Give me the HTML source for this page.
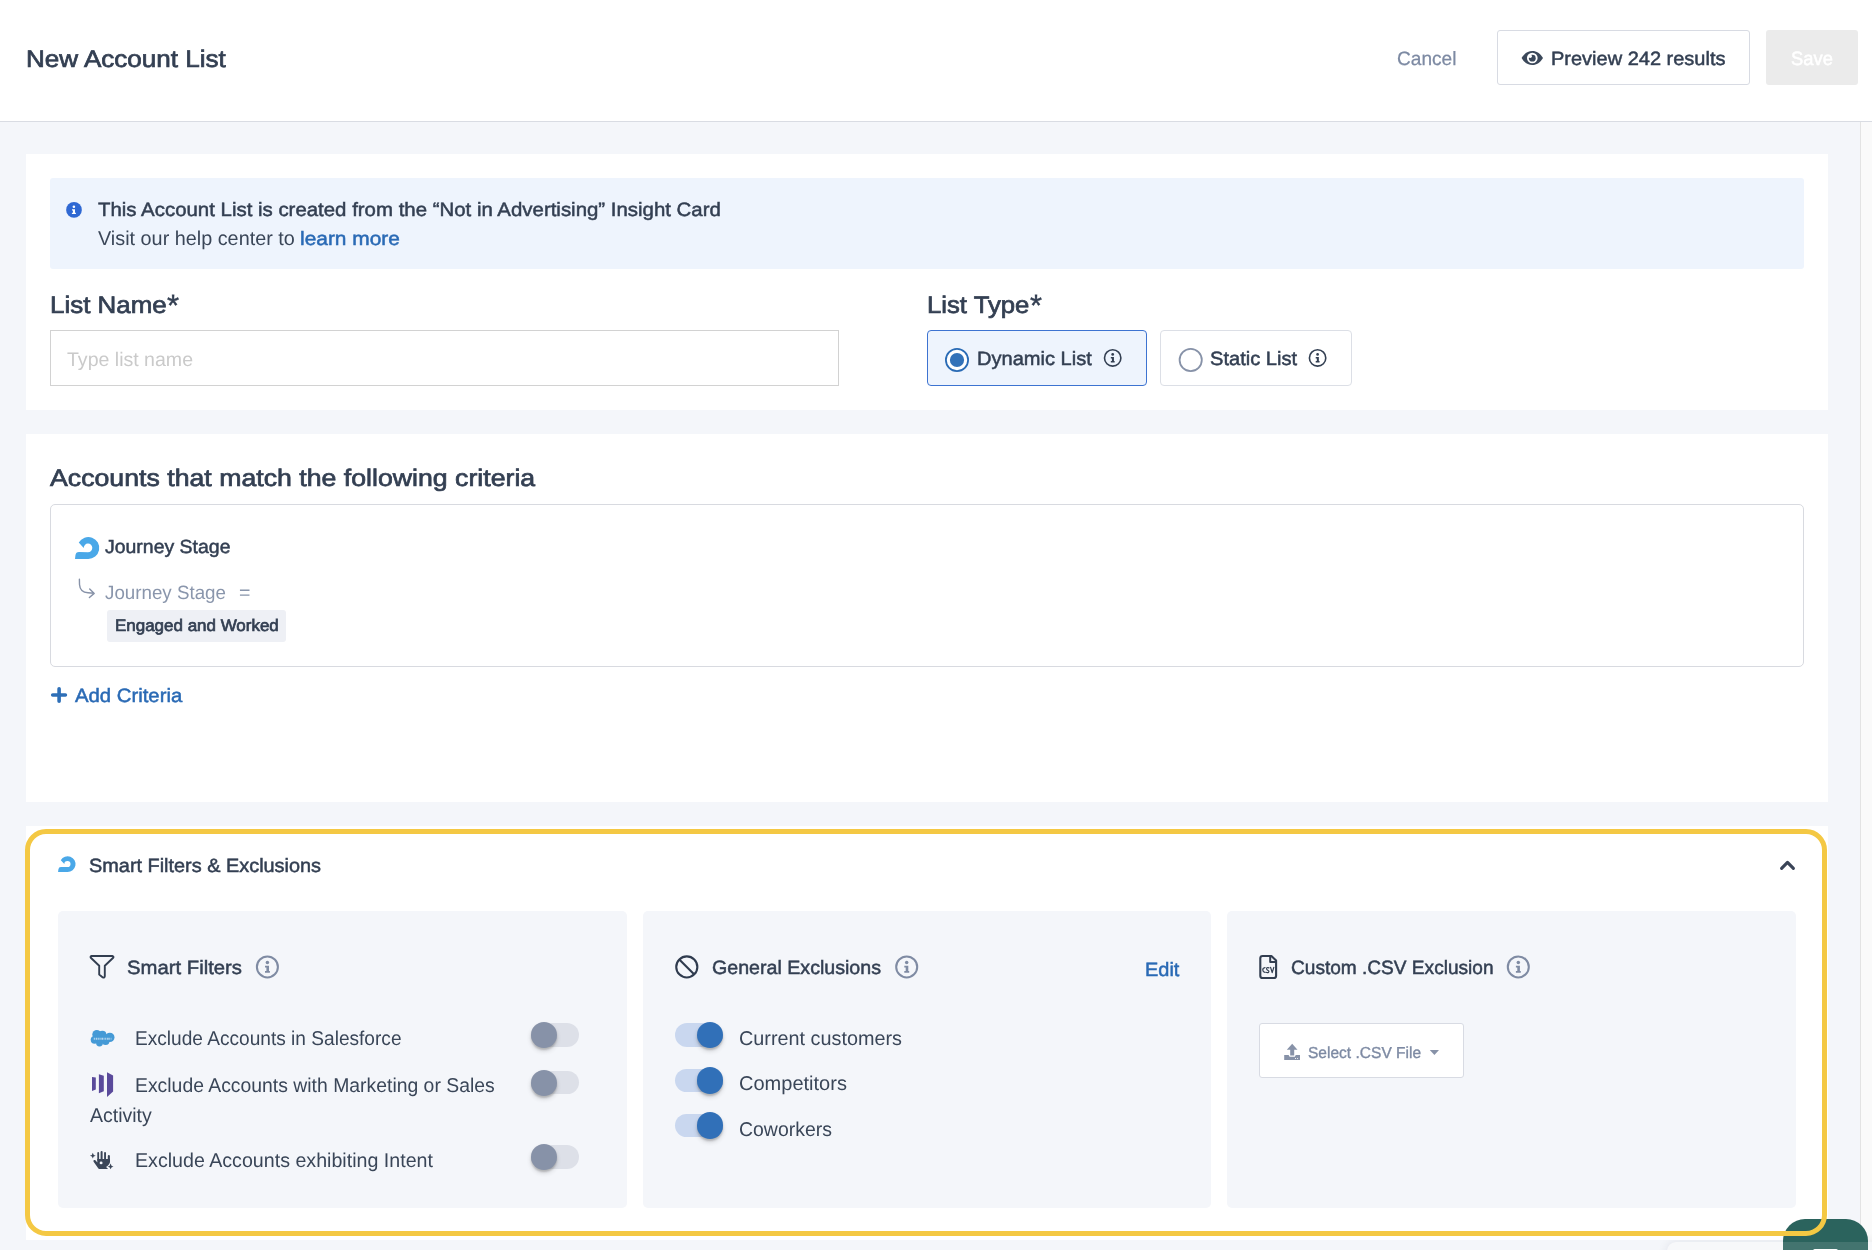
<!DOCTYPE html>
<html lang="en"><head><meta charset="utf-8"><title>New Account List</title>
<style>
html,body{margin:0;padding:0;}
body{width:1872px;height:1250px;overflow:hidden;position:relative;background:#f4f6fa;font-family:"Liberation Sans",sans-serif;}
.a{position:absolute;box-sizing:border-box;}
.t{transform-origin:0 50%;text-rendering:geometricPrecision;position:absolute;white-space:nowrap;line-height:1;font-family:"Liberation Sans",sans-serif;}
svg{position:absolute;overflow:visible;}
.card{background:#fff;}
.panel{background:#f4f6fa;border-radius:5px;}
.track{border-radius:12px;}
.knob{border-radius:50%;box-shadow:0 2px 2px rgba(0,0,0,.18),0 3px 5px rgba(0,0,0,.14);}

</style></head>
<body>
<!-- header -->
<div class="a" style="left:0;top:0;width:1872px;height:122px;background:#fff;border-bottom:1px solid #d9dce3;"></div>
<div class="a" style="left:1497px;top:30px;width:253px;height:55px;border:1px solid #d8dbe3;border-radius:3px;background:#fff;"></div>
<div class="a" style="left:1766px;top:30px;width:92px;height:55px;border-radius:3px;background:#ebebeb;"></div>
<!-- scrollbar -->
<div class="a" style="left:1860px;top:122px;width:12px;height:1128px;background:#fafafa;border-left:1px solid #e3e3e3;"></div>
<!-- card 1 -->
<div class="a card" style="left:26px;top:154px;width:1802px;height:256px;"></div>
<div class="a" style="left:50px;top:178px;width:1754px;height:91px;background:#eef4fd;border-radius:3px;"></div>
<div class="a" style="left:50px;top:330px;width:789px;height:56px;border:1px solid #d2d2d2;background:#fff;"></div>
<div class="a" style="left:927px;top:330px;width:220px;height:56px;border:1px solid #3d73d1;border-radius:4px;background:#eef4fd;"></div>
<div class="a" style="left:1160px;top:330px;width:192px;height:56px;border:1px solid #dcdfe6;border-radius:4px;background:#fff;"></div>
<!-- card 2 -->
<div class="a card" style="left:26px;top:434px;width:1802px;height:368px;"></div>
<div class="a" style="left:50px;top:504px;width:1754px;height:163px;border:1px solid #d8dae0;border-radius:5px;background:#fff;"></div>
<div class="a" style="left:107px;top:610px;width:179px;height:31.8px;background:#eef0f5;border-radius:3px;"></div>
<div class="a" style="left:1667px;top:1241.5px;width:215px;height:20px;border-radius:9px 0 0 0;background:#f6f7fa;box-shadow:0 0 10px 1px rgba(20,30,50,.07);"></div>
<!-- card 3 -->
<div class="a card" style="left:26px;top:826px;width:1802px;height:414px;"></div>
<div class="a panel" style="left:58px;top:911px;width:569px;height:296.5px;"></div>
<div class="a panel" style="left:643px;top:911px;width:568px;height:296.5px;"></div>
<div class="a panel" style="left:1227px;top:911px;width:569px;height:296.5px;"></div>
<div class="a" style="left:1259px;top:1023px;width:205px;height:55px;border:1px solid #d8dbe3;border-radius:3px;background:#fff;"></div>
<!-- toggles off -->
<div class="a track" style="left:531px;top:1023.3px;width:48px;height:23.4px;background:#dde0e8;"></div>
<div class="a knob" style="left:530.8px;top:1022px;width:26px;height:26px;background:#8792a8;"></div>
<div class="a track" style="left:531px;top:1070.8px;width:48px;height:23.4px;background:#dde0e8;"></div>
<div class="a knob" style="left:530.8px;top:1069.5px;width:26px;height:26px;background:#8792a8;"></div>
<div class="a track" style="left:531px;top:1145.3px;width:48px;height:23.4px;background:#dde0e8;"></div>
<div class="a knob" style="left:530.8px;top:1144px;width:26px;height:26px;background:#8792a8;"></div>
<!-- toggles on -->
<div class="a track" style="left:675px;top:1023.3px;width:48px;height:23.4px;background:#c9d7ef;"></div>
<div class="a knob" style="left:696.5px;top:1021.7px;width:26.6px;height:26.6px;background:#3170b8;"></div>
<div class="a track" style="left:675px;top:1068.6px;width:48px;height:23.4px;background:#c9d7ef;"></div>
<div class="a knob" style="left:696.5px;top:1067px;width:26.6px;height:26.6px;background:#3170b8;"></div>
<div class="a track" style="left:675px;top:1113.6px;width:48px;height:23.4px;background:#c9d7ef;"></div>
<div class="a knob" style="left:696.5px;top:1112px;width:26.6px;height:26.6px;background:#3170b8;"></div>
<svg class="a" style="left:0;top:0;" width="1872" height="1250" viewBox="0 0 1872 1250">

<!-- eye -->
<g fill="#3b485a">
  <path d="M1521.6 58 C1524.3 53.4 1527.9 51 1532.3 51 C1536.7 51 1540.3 53.4 1543 58 C1540.3 62.6 1536.7 65 1532.3 65 C1527.9 65 1524.3 62.6 1521.6 58 Z"/>
  <circle cx="1532.3" cy="58" r="5.35" fill="#fff"/>
  <circle cx="1532.3" cy="58.2" r="3.4"/>
  <circle cx="1530.2" cy="56.2" r="1.7" fill="#fff"/>
</g>

<!-- banner info icon -->
<circle cx="74" cy="209.9" r="7.85" fill="#2f68d3"/>
<circle cx="73.9" cy="206.8" r="1.3" fill="#fff"/>
<path d="M72 209.2 H75 V212.8 H75.9 V214 H71.9 V212.8 H72.9 V210.4 H72 Z" fill="#fff"/>

<!-- radios -->
<circle cx="957" cy="360" r="11.1" fill="#fff" stroke="#2a6bb5" stroke-width="1.8"/>
<circle cx="957" cy="360" r="7.1" fill="#3372b8"/>
<circle cx="1190.7" cy="360" r="11.1" fill="#fff" stroke="#8792a8" stroke-width="1.8"/>

<!-- small info icons -->
<g transform="translate(1112.7 357.9) scale(0.78)" fill="#333f52"><circle cx="0" cy="0" r="10.5" fill="none" stroke="#333f52" stroke-width="2.05"/><circle cx="0" cy="-4.4" r="1.75"/><path d="M-2.4 -1.1 H1.6 V4.1 H2.5 V5.9 H-2.4 V4.1 H-1 V0.7 H-2.4 Z"/></g>
<g transform="translate(1317.6 357.9) scale(0.78)" fill="#333f52"><circle cx="0" cy="0" r="10.5" fill="none" stroke="#333f52" stroke-width="2.05"/><circle cx="0" cy="-4.4" r="1.75"/><path d="M-2.4 -1.1 H1.6 V4.1 H2.5 V5.9 H-2.4 V4.1 H-1 V0.7 H-2.4 Z"/></g>
<g transform="translate(267.4 966.9)" fill="#7f8ba3"><circle cx="0" cy="0" r="10.5" fill="none" stroke="#7f8ba3" stroke-width="2.05"/><circle cx="0" cy="-4.4" r="1.75"/><path d="M-2.4 -1.1 H1.6 V4.1 H2.5 V5.9 H-2.4 V4.1 H-1 V0.7 H-2.4 Z"/></g>
<g transform="translate(906.7 966.9)" fill="#7f8ba3"><circle cx="0" cy="0" r="10.5" fill="none" stroke="#7f8ba3" stroke-width="2.05"/><circle cx="0" cy="-4.4" r="1.75"/><path d="M-2.4 -1.1 H1.6 V4.1 H2.5 V5.9 H-2.4 V4.1 H-1 V0.7 H-2.4 Z"/></g>
<g transform="translate(1518.3 966.9)" fill="#7f8ba3"><circle cx="0" cy="0" r="10.5" fill="none" stroke="#7f8ba3" stroke-width="2.05"/><circle cx="0" cy="-4.4" r="1.75"/><path d="M-2.4 -1.1 H1.6 V4.1 H2.5 V5.9 H-2.4 V4.1 H-1 V0.7 H-2.4 Z"/></g>

<!-- journey icons -->
<path d="M3.85 5.6 A11 11 0 1 1 13.1 22.1 L0.1 22.1 L0.5 18.6 Q0.9 15.2 4.1 15.2 L13.1 15.3 A4.3 4.3 0 1 0 8.8 11.1 Z" fill="#4aa8e8" transform="translate(74.9 536.9)"/>
<path d="M3.85 5.6 A11 11 0 1 1 13.1 22.1 L0.1 22.1 L0.5 18.6 Q0.9 15.2 4.1 15.2 L13.1 15.3 A4.3 4.3 0 1 0 8.8 11.1 Z" fill="#4aa8e8" transform="translate(58 856.1) scale(0.72)"/>

<!-- sub arrow -->
<path d="M79.4 579.3 L79.5 584.5 Q80 592.3 88 592.8 L94 593.3 M89.7 588.9 L94.2 593.4 L89.4 597.5" fill="none" stroke="#8792a8" stroke-width="1.4" stroke-linecap="round" stroke-linejoin="round"/>

<!-- plus -->
<path d="M52.7 695 H65.4 M59.1 688.7 V701.2" stroke="#2e6fb7" stroke-width="3.6" stroke-linecap="round" fill="none"/>

<!-- chevron up -->
<path d="M1781.6 868.4 L1787.5 862.3 L1793.4 868.4" fill="none" stroke="#3a4457" stroke-width="3.1" stroke-linecap="round" stroke-linejoin="round"/>

<!-- funnel -->
<path d="M91.6 956 L112.6 956 Q114 956.6 113.2 957.8 L104.8 965.8 L104.8 976.2 Q104.6 978.2 102.8 977.4 L99.2 974.6 L99.2 965.8 L90.8 957.8 Q90 956.6 91.6 956 Z" fill="none" stroke="#323e50" stroke-width="1.9" stroke-linejoin="round"/>

<!-- ban -->
<circle cx="686.8" cy="966.9" r="10.55" fill="none" stroke="#2f3b4e" stroke-width="2.1"/>
<path d="M679.3 959.4 L694.3 974.4" stroke="#2f3b4e" stroke-width="2.1"/>

<!-- csv file -->
<g fill="none" stroke="#323e50" stroke-linejoin="round" stroke-linecap="round">
  <path d="M1262.6 956 H1271.4 L1276.1 960.6 V975.7 Q1276.1 978 1273.8 978 H1262.6 Q1260.3 978 1260.3 975.7 V958.3 Q1260.3 956 1262.6 956 Z" stroke-width="2.1"/>
  <path d="M1270.2 956.4 V961.9 H1275.8" stroke-width="2"/>
  <path d="M1265 967.6 Q1262.6 968 1262.8 970 Q1262.8 972 1265 972.4" stroke-width="1.2"/>
  <path d="M1269 967.8 Q1266.2 967.2 1266.6 969 Q1267 970 1268 970.4 Q1269.4 971.2 1268.6 972.2 Q1267.6 973 1266 972.3" stroke-width="1.2"/>
  <path d="M1270.6 967.3 L1272.2 972.6 L1273.8 967.3" stroke-width="1.2"/>
</g>

<!-- salesforce cloud -->
<g fill="#459ad6" transform="translate(90.6 1029.8)">
  <circle cx="6.2" cy="4.6" r="4.5"/><circle cx="11.8" cy="5" r="4"/><circle cx="19.2" cy="7.6" r="4.7"/>
  <circle cx="4" cy="10" r="3.9"/><circle cx="8.9" cy="13.3" r="3.4"/><circle cx="15" cy="11.2" r="3.9"/>
  <ellipse cx="12" cy="8.6" rx="8" ry="4.6"/>
  <path d="M3.2 8.9 H20.8" stroke="#fff" stroke-opacity=".6" stroke-width="2" stroke-dasharray="1.1 0.8 1.6 0.6 0.9 0.7" fill="none"/>
</g>

<!-- marketo -->
<g fill="#5a4a9b">
  <path d="M92 1077 L95.8 1077.4 L95.8 1089.6 L92 1090.9 Z"/>
  <path d="M98.9 1074.2 L103.8 1075.8 L103.8 1091.2 L98.9 1093.3 Z"/>
  <path d="M107 1072.2 L113.1 1075.5 L113.1 1091.5 L107 1097 Z"/>
</g>

<!-- hand sparkles -->
<g fill="#3b4658" transform="translate(80 1140)">
  <rect x="17.3" y="12" width="1.8" height="9" rx=".9"/>
  <rect x="20.6" y="10.9" width="2" height="10" rx="1"/>
  <rect x="24.1" y="12" width="1.9" height="9" rx=".95"/>
  <rect x="27.8" y="14.9" width="2.1" height="8" rx="1.05"/>
  <path d="M17.3 18.9 H29.9 V22 Q29.9 24 27.5 26 L26 27 L27.8 28.6 Q27.6 29.1 27 29.1 H19.8 Q18.8 29.1 18.2 28.2 L13.6 21.8 Q13 20.6 14 20.1 Q15 19.7 15.7 20.6 L17.3 22.4 Z"/>
  <circle cx="21.1" cy="22.9" r="1.45" fill="#f4f6fa"/>
  <path d="M0 -2.9 Q0.3 -0.3 2.9 0 Q0.3 0.3 0 2.9 Q-0.3 0.3 -2.9 0 Q-0.3 -0.3 0 -2.9 Z" transform="translate(12.8 15.7)"/>
  <path d="M0 -2.9 Q0.3 -0.3 2.9 0 Q0.3 0.3 0 2.9 Q-0.3 0.3 -2.9 0 Q-0.3 -0.3 0 -2.9 Z" transform="translate(30.6 26.4)"/>
</g>

<!-- upload -->
<g fill="#8792a8">
  <path d="M1292.2 1043.8 L1297.5 1049.8 H1294.2 V1055.6 H1290.2 V1049.8 H1286.8 Z"/>
  <path d="M1284.2 1055.1 H1288.6 L1289.6 1056.8 H1294.8 L1295.8 1055.1 H1300 V1059.9 H1284.2 Z"/>
  <circle cx="1295.5" cy="1058.5" r=".55" fill="#fff"/><circle cx="1297.6" cy="1058.5" r=".55" fill="#fff"/>
</g>
<!-- caret -->
<path d="M1429.8 1050.1 H1439 L1434.4 1055.1 Z" fill="#8792a8"/>
</svg>

<!-- chat bubble -->
<div class="a" style="left:1783px;top:1219px;width:85px;height:70px;border-radius:22px;background:#2b635d;"></div>
<div class="a" style="left:1813px;top:1248.5px;width:24.6px;height:6px;border-radius:2px 2px 0 0;background:#fff;"></div>
<!-- bottom overlay -->
<div class="a" style="left:1667px;top:1241.5px;width:215px;height:20px;border-radius:9px 0 0 0;background:rgba(255,255,255,.115);"></div>
<!-- yellow highlight -->
<div class="a" style="left:25px;top:829px;width:1802px;height:407px;border:5px solid #f4c843;border-radius:21px;"></div>

<!-- text layer -->
<div class="a" style="left:0;top:0;width:1872px;height:1250px;will-change:transform;">
<span class="t" style="left:25.76px;top:48.00px;font-size:23.9px;color:#333f52;transform:scaleX(1.0905);-webkit-text-stroke:0.7px #333f52;">New Account List</span>
<span class="t" style="left:1397.13px;top:50.00px;font-size:19.3px;color:#7d8aa3;transform:scaleX(0.9905);-webkit-text-stroke:0.25px #7d8aa3;">Cancel</span>
<span class="t" style="left:1550.66px;top:50.00px;font-size:19.3px;color:#333f52;transform:scaleX(1.0369);-webkit-text-stroke:0.5px #333f52;">Preview 242 results</span>
<span class="t" style="left:1791.17px;top:50.00px;font-size:19.3px;color:#ffffff;transform:scaleX(0.9523);-webkit-text-stroke:0.5px #ffffff;">Save</span>
<span class="t" style="left:97.94px;top:201.00px;font-size:19.3px;color:#333f52;transform:scaleX(1.0587);-webkit-text-stroke:0.5px #333f52;">This Account List is created from the “Not in Advertising” Insight Card</span>
<span class="t" style="left:98.31px;top:230.00px;font-size:19.9px;color:#3a4658;transform:scaleX(0.9963);">Visit our help center to</span>
<span class="t" style="left:299.99px;top:230.00px;font-size:19.3px;color:#2a6ab5;transform:scaleX(1.0844);-webkit-text-stroke:0.5px #2a6ab5;">learn more</span>
<span class="t" style="left:49.87px;top:294.00px;font-size:23.9px;color:#333f52;transform:scaleX(1.0859);-webkit-text-stroke:0.7px #333f52;">List Name</span>
<span class="t" style="left:167.10px;top:290.00px;font-size:31.0px;color:#333f52;transform:scaleX(1.0018);-webkit-text-stroke:0.4px #333f52;">*</span>
<span class="t" style="left:926.89px;top:294.00px;font-size:23.9px;color:#333f52;transform:scaleX(1.0754);-webkit-text-stroke:0.7px #333f52;">List Type</span>
<span class="t" style="left:1029.80px;top:290.00px;font-size:31.0px;color:#333f52;transform:scaleX(0.9928);-webkit-text-stroke:0.4px #333f52;">*</span>
<span class="t" style="left:66.86px;top:351.00px;font-size:19.6px;color:#cacaca;transform:scaleX(0.9975);">Type list name</span>
<span class="t" style="left:977.35px;top:350.00px;font-size:19.3px;color:#333f52;transform:scaleX(1.0402);-webkit-text-stroke:0.5px #333f52;">Dynamic List</span>
<span class="t" style="left:1210.09px;top:350.00px;font-size:19.3px;color:#333f52;transform:scaleX(1.0416);-webkit-text-stroke:0.5px #333f52;">Static List</span>
<span class="t" style="left:49.95px;top:467.00px;font-size:23.9px;color:#333f52;transform:scaleX(1.1173);-webkit-text-stroke:0.7px #333f52;">Accounts that match the following criteria</span>
<span class="t" style="left:105.20px;top:538.00px;font-size:19.0px;color:#333f52;transform:scaleX(1.0240);-webkit-text-stroke:0.5px #333f52;">Journey Stage</span>
<span class="t" style="left:105.21px;top:584.00px;font-size:19.2px;color:#8a96ac;transform:scaleX(0.9773);">Journey Stage</span>
<span class="t" style="left:239.04px;top:584.00px;font-size:19.2px;color:#8a96ac;transform:scaleX(1.0192);">=</span>
<span class="t" style="left:114.61px;top:618.00px;font-size:16.6px;color:#333f52;transform:scaleX(1.0223);-webkit-text-stroke:0.7px #333f52;">Engaged and Worked</span>
<span class="t" style="left:75.06px;top:687.00px;font-size:19.3px;color:#2a6ab5;transform:scaleX(1.0534);-webkit-text-stroke:0.5px #2a6ab5;">Add Criteria</span>
<span class="t" style="left:88.50px;top:857.00px;font-size:19.3px;color:#333f52;transform:scaleX(1.0312);-webkit-text-stroke:0.5px #333f52;">Smart Filters &amp; Exclusions</span>
<span class="t" style="left:126.98px;top:959.00px;font-size:19.3px;color:#333f52;transform:scaleX(1.0521);-webkit-text-stroke:0.5px #333f52;">Smart Filters</span>
<span class="t" style="left:135.33px;top:1030.00px;font-size:19.9px;color:#3a4658;transform:scaleX(0.9604);">Exclude Accounts in Salesforce</span>
<span class="t" style="left:135.31px;top:1077.00px;font-size:19.9px;color:#3a4658;transform:scaleX(0.9741);">Exclude Accounts with Marketing or Sales</span>
<span class="t" style="left:89.86px;top:1107.00px;font-size:19.9px;color:#3a4658;transform:scaleX(0.9807);">Activity</span>
<span class="t" style="left:135.29px;top:1152.00px;font-size:19.9px;color:#3a4658;transform:scaleX(0.9870);">Exclude Accounts exhibiting Intent</span>
<span class="t" style="left:712.01px;top:959.00px;font-size:19.3px;color:#333f52;transform:scaleX(1.0174);-webkit-text-stroke:0.5px #333f52;">General Exclusions</span>
<span class="t" style="left:1144.76px;top:961.00px;font-size:19.3px;color:#2a6ab5;transform:scaleX(1.0349);-webkit-text-stroke:0.5px #2a6ab5;">Edit</span>
<span class="t" style="left:738.99px;top:1030.00px;font-size:19.9px;color:#3a4658;transform:scaleX(0.9965);">Current customers</span>
<span class="t" style="left:738.98px;top:1075.00px;font-size:19.9px;color:#3a4658;transform:scaleX(1.0067);">Competitors</span>
<span class="t" style="left:739.01px;top:1121.00px;font-size:19.9px;color:#3a4658;transform:scaleX(0.9772);">Coworkers</span>
<span class="t" style="left:1291.03px;top:959.00px;font-size:19.3px;color:#333f52;transform:scaleX(0.9895);-webkit-text-stroke:0.5px #333f52;">Custom .CSV Exclusion</span>
<span class="t" style="left:1308.29px;top:1046.00px;font-size:15.9px;color:#7d8aa3;transform:scaleX(0.9776);-webkit-text-stroke:0.35px #7d8aa3;">Select .CSV File</span>
</div>
</body></html>
